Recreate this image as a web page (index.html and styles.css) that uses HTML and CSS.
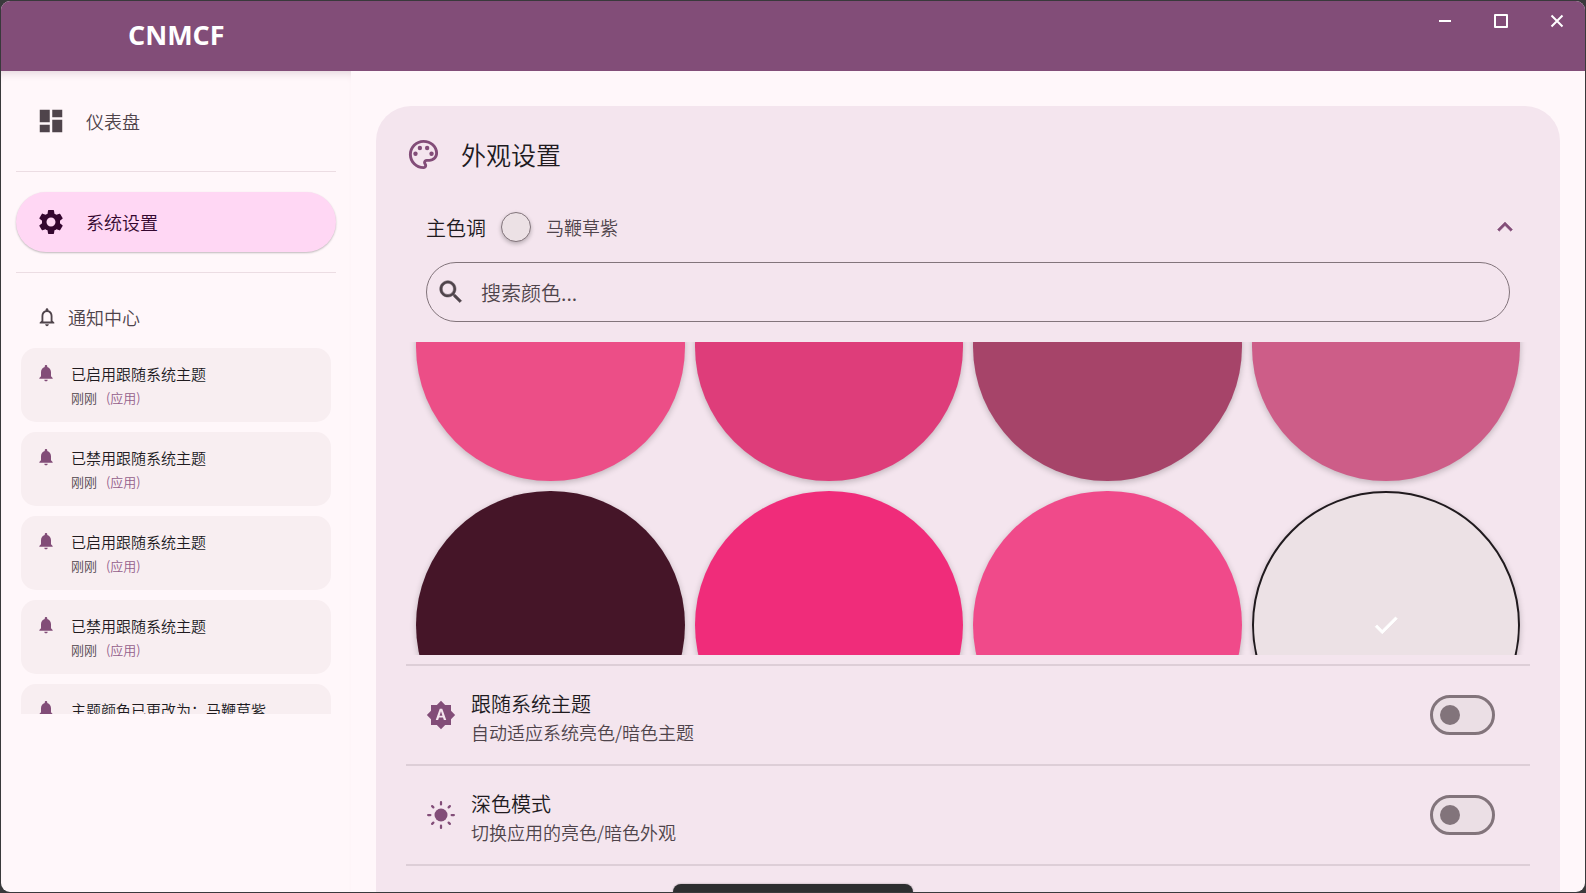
FILE: index.html
```html
<!DOCTYPE html>
<html lang="zh-CN">
<head>
<meta charset="utf-8">
<meta name="viewport" content="width=device-width, initial-scale=1">
<title>CNMCF</title>
<link rel="stylesheet" href="styles.css">
</head>
<body>
<svg class="symbols" aria-hidden="true">
  <symbol id="bell" viewBox="0 0 24 24"><path d="M12 22c1.100 0 2-.9 2-2h-4c0 1.100.890 2 2 2zm6-6v-5c0-3.070-1.640-5.640-4.500-6.320V4c0-.83-.67-1.500-1.500-1.500s-1.500.670-1.500 1.500v.680C7.630 5.360 6 7.920 6 11v5l-2 2v1h16v-1l-2-2z"/></symbol>
</svg>
<div class="window">
  <header class="titlebar">
    <h1 class="brand">CNMCF</h1>
    <div class="controls">
      <button class="control" type="button" aria-label="最小化"><svg viewBox="0 0 16 16"><path d="M2 8h12"/></svg></button>
      <button class="control" type="button" aria-label="最大化"><svg viewBox="0 0 16 16"><path d="M2 2h12v12H2z"/></svg></button>
      <button class="control" type="button" aria-label="关闭"><svg viewBox="0 0 16 16"><path d="M2.500 2.500l11 11M13.500 2.500l-11 11"/></svg></button>
    </div>
  </header>
  <div class="content">
    <aside class="sidebar">
      <nav>
        <ul class="nav">
          <li><a class="nav-item" href="#dashboard"><svg viewBox="0 0 24 24"><path d="M3 13h8V3H3v10zm0 8h8v-6H3v6zm10 0h8V11h-8v10zm0-18v6h8V3h-8z"/></svg>仪表盘</a></li>
          <li><a class="nav-item nav-item-active" href="#settings" aria-current="page"><svg viewBox="0 0 24 24"><path d="M19.140 12.940c.040-.3.060-.61.060-.94 0-.32-.02-.64-.07-.94l2.030-1.580c.180-.14.230-.41.120-.61l-1.920-3.320c-.12-.22-.37-.29-.59-.22l-2.390.960c-.5-.38-1.030-.7-1.620-.94l-.36-2.540c-.04-.24-.24-.41-.48-.41h-3.840c-.24 0-.43.170-.47.410l-.36 2.540c-.59.240-1.130.570-1.620.940l-2.390-.96c-.22-.08-.47 0-.59.220L2.740 8.870c-.12.210-.08.470.120.610l2.030 1.580c-.05.300-.09.630-.09.940s.020.640.070.940l-2.030 1.580c-.18.140-.23.410-.12.610l1.920 3.320c.120.220.370.290.590.220l2.390-.96c.5.380 1.030.700 1.620.940l.360 2.540c.050.240.240.410.480.410h3.840c.240 0 .440-.17.470-.41l.360-2.540c.590-.24 1.130-.56 1.620-.94l2.390.960c.220.080.470 0 .590-.22l1.920-3.320c.120-.22.070-.47-.12-.61l-2.010-1.580zM12 15.600c-1.980 0-3.600-1.620-3.600-3.600s1.620-3.600 3.600-3.600 3.600 1.620 3.600 3.600-1.620 3.600-3.600 3.600z"/></svg>系统设置</a></li>
        </ul>
      </nav>
      <h2 class="notice-heading"><svg viewBox="0 0 24 24"><path d="M12 22c1.100 0 2-.9 2-2h-4c0 1.100.900 2 2 2zm6-6v-5c0-3.070-1.630-5.640-4.500-6.320V4c0-.83-.67-1.500-1.500-1.500s-1.500.670-1.500 1.500v.680C7.640 5.360 6 7.920 6 11v5l-2 2v1h16v-1l-2-2zm-2 1H8v-6c0-2.480 1.510-4.500 4-4.500s4 2.020 4 4.500v6z"/></svg>通知中心</h2>
      <ul class="notices">
        <li class="notice"><svg><use href="#bell"/></svg><div><p class="notice-title">已启用跟随系统主题</p><p class="notice-meta">刚刚<span>(应用)</span></p></div></li>
        <li class="notice"><svg><use href="#bell"/></svg><div><p class="notice-title">已禁用跟随系统主题</p><p class="notice-meta">刚刚<span>(应用)</span></p></div></li>
        <li class="notice"><svg><use href="#bell"/></svg><div><p class="notice-title">已启用跟随系统主题</p><p class="notice-meta">刚刚<span>(应用)</span></p></div></li>
        <li class="notice"><svg><use href="#bell"/></svg><div><p class="notice-title">已禁用跟随系统主题</p><p class="notice-meta">刚刚<span>(应用)</span></p></div></li>
        <li class="notice"><svg><use href="#bell"/></svg><div><p class="notice-title">主题颜色已更改为：马鞭草紫</p></div></li>
      </ul>
    </aside>
    <main class="main">
      <section class="panel">
        <h2 class="panel-title"><svg viewBox="0 0 24 24"><path d="M12 22C6.490 22 2 17.510 2 12S6.490 2 12 2s10 4.040 10 9c0 3.310-2.690 6-6 6h-1.770c-.28 0-.5.220-.5.500 0 .120.050.230.130.330.410.470.640 1.060.640 1.670 0 1.380-1.120 2.500-2.500 2.500zm0-18c-4.410 0-8 3.590-8 8s3.590 8 8 8c.280 0 .5-.22.500-.5 0-.16-.08-.28-.14-.35-.41-.46-.63-1.050-.63-1.650 0-1.380 1.120-2.500 2.500-2.500H16c2.210 0 4-1.790 4-4 0-3.860-3.590-7-8-7z"/><circle cx="6.500" cy="11.500" r="1.500"/><circle cx="9.500" cy="7.500" r="1.500"/><circle cx="14.500" cy="7.500" r="1.500"/><circle cx="17.500" cy="11.500" r="1.500"/></svg>外观设置</h2>
        <div class="accent-row">
          <span class="accent-label">主色调</span>
          <span class="accent-dot"></span>
          <span class="accent-name">马鞭草紫</span>
          <button class="collapse" type="button" aria-label="收起" aria-expanded="true"><svg viewBox="0 0 24 24"><path d="M12 8l-6 6 1.410 1.410L12 10.830l4.590 4.580L18 14z"/></svg></button>
        </div>
        <div class="search">
          <svg viewBox="0 0 24 24"><path d="M15.500 14h-.79l-.28-.27C15.410 12.590 16 11.110 16 9.500 16 5.910 13.090 3 9.500 3S3 5.910 3 9.500 5.910 16 9.500 16c1.610 0 3.090-.59 4.230-1.570l.270.280v.790l5 4.990L20.490 19l-4.990-5zm-6 0C7.010 14 5 11.990 5 9.500S7.010 5 9.500 5 14 7.010 14 9.500 11.990 14 9.500 14z"/></svg>
          <input type="text" placeholder="搜索颜色..." aria-label="搜索颜色">
        </div>
        <div class="palette">
          <div class="swatches">
            <button class="swatch rose" type="button" aria-label="玫瑰粉"></button>
            <button class="swatch cerise" type="button" aria-label="樱桃红"></button>
            <button class="swatch wine" type="button" aria-label="酒红"></button>
            <button class="swatch blush" type="button" aria-label="淡玫红"></button>
            <button class="swatch plum" type="button" aria-label="深紫红"></button>
            <button class="swatch magenta" type="button" aria-label="洋红"></button>
            <button class="swatch pink" type="button" aria-label="亮粉"></button>
            <button class="swatch verbena" type="button" aria-label="马鞭草紫" aria-pressed="true"><svg viewBox="0 0 24 24"><path d="M9 16.170L4.830 12l-1.420 1.410L9 19 21 7l-1.410-1.410z"/></svg></button>
          </div>
        </div>
        <div class="option">
          <svg viewBox="0 0 24 24"><path d="M10.850 12.650h2.300L12 9l-1.150 3.650zM20 8.690V4h-4.690L12 .690 8.690 4H4v4.690L.690 12 4 15.310V20h4.690L12 23.310 15.310 20H20v-4.690L23.310 12 20 8.690zM14.300 16l-.7-2h-3.200l-.7 2H7.800L11 7h2l3.200 9h-1.900z"/></svg>
          <label class="option-text" for="follow"><span class="option-title">跟随系统主题</span><span class="option-note">自动适应系统亮色/暗色主题</span></label>
          <input class="switch" id="follow" type="checkbox" role="switch">
        </div>
        <div class="option">
          <svg viewBox="0 0 24 24"><circle cx="12" cy="12" r="5.200"/><path class="rays" d="M12 1.700v1.800M12 20.500v1.800M1.700 12h1.800M20.500 12h1.800M4.900 4.900l1 1M18.100 18.100l1 1M4.900 19.100l1-1M18.100 5.900l1-1"/></svg>
          <label class="option-text" for="dark"><span class="option-title">深色模式</span><span class="option-note">切换应用的亮色/暗色外观</span></label>
          <input class="switch" id="dark" type="checkbox" role="switch">
        </div>
        <div class="option"></div>
      </section>
    </main>
  </div>
  <div class="snackbar"></div>
</div>
</body>
</html>
```

FILE: styles.css
```css
* { box-sizing: border-box; }

body {
  margin: 0;
  height: 100vh;
  padding: 1px;
  overflow: hidden;
  background: #39393b;
  color: #201a1e;
  font-family: "Noto Sans CJK SC", sans-serif;
  font-weight: 350;
}

h1, h2, p, ul { margin: 0; padding: 0; font-weight: inherit; }
ul { list-style: none; }
button { padding: 0; border: 0; background: none; color: inherit; font: inherit; }
svg { flex: none; fill: currentColor; }
.symbols { position: absolute; width: 0; height: 0; }

.window {
  position: relative;
  display: flex;
  flex-direction: column;
  height: 100%;
  overflow: hidden;
  border-radius: 9px;
  background: #fff7fa;
}

.titlebar {
  display: flex;
  flex: none;
  justify-content: space-between;
  height: 70px;
  background: #824d78;
  color: #fff;
}
.brand {
  padding: 16px 0 0 127px;
  font: 700 27px/36px "Open Sans", "Noto Sans", sans-serif;
}
.controls { display: flex; }
.control { display: grid; place-items: center; width: 56px; height: 40px; }
.control svg { width: 16px; height: 16px; fill: none; stroke: #fff; stroke-width: 2; stroke-linejoin: round; }

.content { display: flex; flex: 1; min-height: 0; }

.sidebar {
  flex: none;
  width: 350px;
  padding: 0 20px;
  overflow: hidden;
  box-shadow: inset 0 8px 8px -6px #e2d3da;
}
.nav { margin: 0 -5px; }
.nav li { padding: 20px 0; border-bottom: 1px solid #ecdde3; }
.nav-item {
  display: flex;
  align-items: center;
  gap: 20px;
  height: 60px;
  padding-left: 20px;
  border-radius: 30px;
  color: #4f444b;
  font-size: 18px;
  text-decoration: none;
}
.nav-item svg { width: 30px; height: 30px; }
.nav-item-active {
  background: #ffd7f4;
  box-shadow: 0 1px 2px #00000040;
  color: #34072f;
}

.notice-heading {
  display: flex;
  align-items: center;
  gap: 10px;
  height: 30px;
  margin: 29px 0 16px;
  padding-left: 15px;
  color: #4f444b;
  font-size: 18px;
}
.notice-heading svg { width: 22px; height: 22px; }

.notices {
  display: flex;
  flex-direction: column;
  gap: 10px;
  height: 366px;
  overflow: hidden;
}
.notice {
  display: flex;
  flex: none;
  align-items: flex-start;
  gap: 15px;
  height: 74px;
  padding: 15px;
  border-radius: 15px;
  background: #f8eef1;
}
.notice svg { width: 20px; height: 20px; color: #824d78; }
.notice-title { font-size: 15px; line-height: 22px; }
.notice-meta { color: #4f444b; font-size: 13px; line-height: 26px; }
.notice-meta span { margin-left: 9px; color: #945f8b; }

.main { flex: 1; min-width: 0; padding: 35px 25px 0; }
.panel {
  height: 100%;
  padding: 30px;
  overflow: hidden;
  border-radius: 35px 35px 0 0;
  background: #f4e5ee;
}
.panel-title {
  display: flex;
  align-items: center;
  gap: 20px;
  height: 36px;
  font-size: 25px;
}
.panel-title svg { width: 35px; height: 35px; color: #824d78; }

.accent-row {
  display: flex;
  align-items: center;
  gap: 15px;
  height: 30px;
  margin: 40px 10px 20px 20px;
}
.accent-label { font-size: 20px; }
.accent-dot {
  width: 30px;
  height: 30px;
  border: 1px solid #82747b;
  border-radius: 50%;
  background: #ece1e5;
  box-shadow: 0 2px 4px #00000040;
}
.accent-name { color: #4f444b; font-size: 18px; }
.collapse { display: grid; place-items: center; width: 30px; height: 30px; margin: 0 0 0 auto; color: #824d78; }
.collapse svg { width: 30px; height: 30px; stroke: currentColor; stroke-width: 0.4; }

.search {
  display: flex;
  align-items: center;
  gap: 15px;
  height: 60px;
  margin: 0 20px 20px;
  padding: 0 9px;
  border: 1px solid #82747b;
  border-radius: 30px;
  color: #4f444b;
}
.search svg { width: 30px; height: 30px; stroke: currentColor; stroke-width: 0.4; }
.search input {
  flex: 1;
  min-width: 0;
  padding: 0;
  border: 0;
  outline: 0;
  background: none;
  color: inherit;
  font: inherit;
  font-size: 20px;
}
.search input::placeholder { color: #4f444b; opacity: 1; }

.palette { height: 313px; margin-bottom: 9px; padding: 0 10px; overflow: hidden; }
.swatches {
  display: grid;
  grid-template-columns: repeat(4, 1fr);
  gap: 10px;
  margin-top: -130px;
}
.swatch {
  display: grid;
  place-items: center;
  aspect-ratio: 1;
  border-radius: 50%;
  box-shadow: 0 2px 6px #00000038;
}
.swatch svg { width: 30px; height: 30px; color: #fff; stroke: currentColor; stroke-width: 0.6; }
.rose { background: #ec4e87; }
.cerise { background: #de3d7a; }
.wine { background: #a64469; }
.blush { background: #cd5d88; }
.plum { background: #451528; }
.magenta { background: #f02c7a; }
.pink { background: #f04a8a; }
.verbena { border: 2px solid #201a1e; background: #ece1e5; }

.option {
  display: flex;
  align-items: center;
  gap: 15px;
  height: 100px;
  padding: 0 35px 0 20px;
  border-top: 2px solid #ddced7;
}
.option svg { width: 30px; height: 30px; color: #824d78; }
.rays { fill: none; stroke: currentColor; stroke-width: 1.800; stroke-linecap: round; }
.option-text { display: flex; flex: 1; flex-direction: column; padding-top: 5px; }
.option-title { font-size: 20px; line-height: 28px; }
.option-note { color: #4f444b; font-size: 18px; line-height: 28px; }

.switch {
  display: flex;
  align-items: center;
  width: 65px;
  height: 40px;
  margin: 0;
  padding: 0 7px;
  appearance: none;
  border: 3px solid #82747b;
  border-radius: 20px;
  background: #ebdfe5;
}
.switch::before {
  content: "";
  width: 20px;
  height: 20px;
  border-radius: 50%;
  background: #82747b;
}
.switch:checked { justify-content: flex-end; }

.snackbar {
  position: absolute;
  bottom: 0;
  left: 50%;
  width: 240px;
  height: 8px;
  transform: translateX(-50%);
  border-radius: 8px 8px 0 0;
  background: #2d2e30;
  box-shadow: 0 0 2px #00000060;
}
```
